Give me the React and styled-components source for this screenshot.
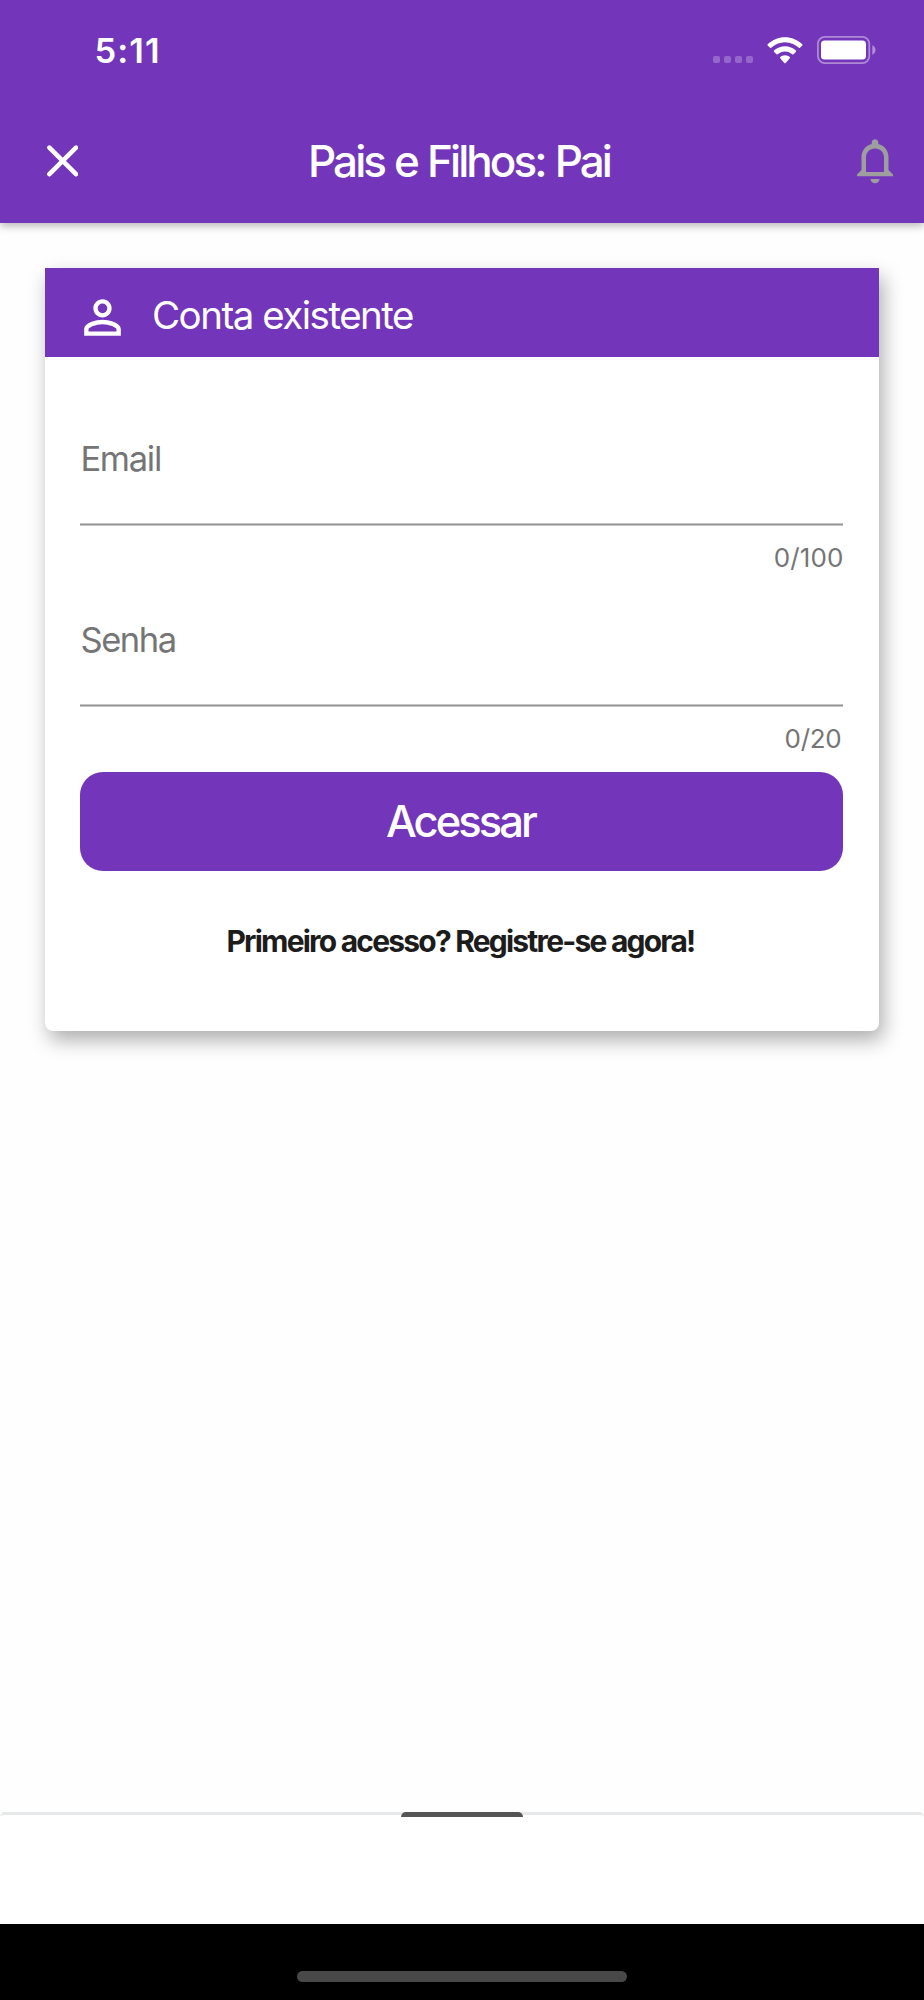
import styled, { createGlobalStyle } from 'styled-components';
import { MdPersonOutline } from 'react-icons/md';

const GlobalStyle = createGlobalStyle`
	body {
		margin: 0;
		background-color: #fff;
		font-family: Inter, 'Liberation Sans', sans-serif;
	}

	* {
		box-sizing: border-box;
	}
`;

const Screen = styled.div`
	display: flex;
	flex-direction: column;
	width: 924px;
	height: 2000px;
	background-color: #fefefe;
`;

const Header = styled.header`
	height: 223px;
	background-color: #7335b9;
	color: #fff;
	box-shadow: 0 3px 8px rgba(0, 0, 0, 0.28);
`;

const StatusBar = styled.div`
	display: flex;
	justify-content: space-between;
	align-items: center;
	height: 97px;
	padding: 4px 48px 0 94.5px;
`;

const Time = styled.div`
	font-size: 34.5px;
	font-weight: 600;
	letter-spacing: 1.07px;
`;

const StatusIcons = styled.div`
	display: flex;
	align-items: center;
	padding-bottom: 1px;
`;

const Signal = styled.div`
	display: flex;
	gap: 4px;
	margin: 19px 14px 0 0;
`;

const SignalDot = styled.span`
	width: 7px;
	height: 7px;
	border-radius: 2px;
	background-color: rgba(255, 255, 255, 0.25);
`;

const NavBar = styled.div`
	display: flex;
	justify-content: space-between;
	align-items: center;
	height: 126px;
	padding: 1px 31px 0 46px;
`;

const Title = styled.h1`
	margin: 0 17px 0 0;
	font-size: 44px;
	font-weight: 500;
	letter-spacing: -2.93px;
	word-spacing: 1.2px;
	white-space: nowrap;
`;

const Content = styled.main`
	flex: 1;
	padding: 45px;
`;

const Card = styled.section`
	height: 763px;
	border-radius: 0 0 8px 8px;
	background-color: #fff;
	box-shadow: 4px 9px 20px rgba(0, 0, 0, 0.32);
`;

const CardHeader = styled.div`
	display: flex;
	align-items: center;
	gap: 22px;
	height: 89px;
	padding: 9px 30px 0;
	background-color: #7335b9;
	color: #fff;
`;

const CardTitle = styled.h2`
	margin: 0;
	padding-bottom: 4px;
	font-size: 38.5px;
	font-weight: 400;
	letter-spacing: -1.5px;
`;

const Form = styled.div`
	display: flex;
	flex-direction: column;
	padding: 53px 35.6px 0 35.4px;
`;

const FieldBox = styled.div`
	height: 181px;
	color: #757575;
`;

const Label = styled.label`
	display: block;
	height: 113px;
	font-size: 34.5px;
	letter-spacing: ${({ $spacing }) => $spacing}px;
	line-height: 97px;
`;

const Underline = styled.div`
	height: 3px;
	border: solid #c4c4c4;
	border-width: 1px 0;
	background-color: #969696;
`;

const Counter = styled.div`
	padding-right: ${({ $inset }) => $inset}px;
	font-size: 26px;
	letter-spacing: ${({ $spacing }) => $spacing}px;
	line-height: 63px;
	text-align: right;
`;

const SubmitButton = styled.button`
	height: 98.5px;
	padding: 0 3px 0 0;
	border: none;
	border-radius: 23px;
	background-color: #7335b9;
	color: #fff;
	font-family: inherit;
	font-size: 43.5px;
	font-weight: 500;
	letter-spacing: -2.95px;
`;

const RegisterLink = styled.a`
	margin-right: 3px;
	color: #1c1c1c;
	font-size: 30px;
	font-weight: 700;
	letter-spacing: -1.79px;
	line-height: 140px;
	text-align: center;
	white-space: nowrap;
`;

const BottomSheet = styled.div`
	display: flex;
	justify-content: center;
	height: 112px;
	border-top: 3px solid #e7e8ea;
	border-radius: 5px 5px 0 0;
	background-color: #fff;
`;

const SheetHandle = styled.div`
	width: 122px;
	height: 5px;
	margin-top: -3px;
	border-radius: 6px 6px 0 0;
	background-color: #555;
`;

const HomeBar = styled.div`
	display: flex;
	justify-content: center;
	height: 76px;
	padding-top: 47px;
	background-color: #000;
`;

const HomeIndicator = styled.div`
	width: 330px;
	height: 11px;
	border-radius: 6px;
	background-color: #484848;
`;

const Battery = styled.svg`
	margin-left: 14px;
`;

const Bell = styled.svg`
	margin-top: 2px;
`;

const WifiIcon = () => (
	<svg width="36" height="27" viewBox="0 0 36 27" fill="#fff">
		<path d="M18 0.2C24.7 0.2 30.9 2.9 35.3 7.3C35.7 7.7 35.7 8.1 35.3 8.5L33 10.8C32.6 11.2 32.2 11.2 31.8 10.8C28.1 7.4 23.3 5.3 18 5.3S7.9 7.4 4.2 10.8C3.8 11.2 3.4 11.2 3 10.8L0.7 8.5C0.3 8.1 0.3 7.7 0.7 7.3C5.1 2.9 11.3 0.2 18 0.2Z" />
		<path d="M18 9.2C22.2 9.2 26.1 10.9 29 13.6C29.4 14 29.4 14.4 29 14.8L26.5 17.3C26.1 17.7 25.7 17.7 25.3 17.3C23.4 15.5 20.8 14.4 18 14.4S12.6 15.5 10.7 17.3C10.3 17.7 9.9 17.7 9.5 17.3L7 14.8C6.6 14.4 6.6 14 7 13.6C9.9 10.9 13.8 9.2 18 9.2Z" />
		<path d="M18 18.2C19.8 18.2 21.5 18.9 22.8 20C23.2 20.4 23.2 20.8 22.8 21.2L18.7 25.9C18.3 26.4 17.7 26.4 17.3 25.9L13.2 21.2C12.8 20.8 12.8 20.4 13.2 20C14.5 18.9 16.2 18.2 18 18.2Z" />
	</svg>
);

const BatteryIcon = () => (
	<Battery width="59" height="28" viewBox="0 0 59 28" fill="none">
		<rect x="0.9" y="0.9" width="51.4" height="26.2" rx="7" stroke="#fff" strokeOpacity="0.42" strokeWidth="1.8" />
		<rect x="4" y="4.6" width="45" height="19" rx="3.6" fill="#fff" />
		<path d="M55.3 9.3C57.3 10.1 58.5 11.9 58.5 14S57.3 17.9 55.3 18.7Z" fill="#fff" fillOpacity="0.45" />
	</Battery>
);

const CloseIcon = () => (
	<svg width="32" height="32" viewBox="0 0 32 32" fill="none" stroke="#fff" strokeWidth="4.6">
		<path d="M3.4 2.6L30 29.2M30 2.6L3.4 29.2" strokeLinecap="round" />
	</svg>
);

const BellIcon = () => (
	<Bell width="36" height="45" viewBox="0 0 36 45" fill="#9e9e9e">
		<path
			fillRule="evenodd"
			d="M18 0.3C19.9 0.3 21.3 1.8 21.3 3.7V5C27.3 6.4 31.5 11.6 31.5 18.2V31L36 35.4V37.3H0V35.4L4.5 31V18.2C4.5 11.6 8.7 6.4 14.7 5V3.7C14.7 1.8 16.1 0.3 18 0.3ZM18 9.5C12.8 9.5 9 13.4 9 18.6V33H27V18.6C27 13.4 23.2 9.5 18 9.5Z"
		/>
		<path d="M13.5 40H22.5C22.5 42.4 20.5 44.3 18 44.3S13.5 42.4 13.5 40Z" />
	</Bell>
);

const Field = ({ label, counter, labelSpacing, counterSpacing, counterInset }) => (
	<FieldBox>
		<Label $spacing={labelSpacing}>{label}</Label>
		<Underline />
		<Counter $spacing={counterSpacing} $inset={counterInset}>
			{counter}
		</Counter>
	</FieldBox>
);

const App = () => {
	return (
		<>
			<GlobalStyle />
			<Screen>
				<Header>
					<StatusBar>
						<Time>5:11</Time>
						<StatusIcons>
							<Signal>
								<SignalDot />
								<SignalDot />
								<SignalDot />
								<SignalDot />
							</Signal>
							<WifiIcon />
							<BatteryIcon />
						</StatusIcons>
					</StatusBar>
					<NavBar>
						<CloseIcon />
						<Title>Pais e Filhos: Pai</Title>
						<BellIcon />
					</NavBar>
				</Header>
				<Content>
					<Card>
						<CardHeader>
							<MdPersonOutline size={55} />
							<CardTitle>Conta existente</CardTitle>
						</CardHeader>
						<Form>
							<Field
								label="Email"
								counter="0/100"
								labelSpacing={-1.3}
								counterSpacing={0.1}
								counterInset={0}
							/>
							<Field
								label="Senha"
								counter="0/20"
								labelSpacing={-1.4}
								counterSpacing={-0.3}
								counterInset={2}
							/>
							<SubmitButton>Acessar</SubmitButton>
							<RegisterLink>Primeiro acesso? Registre-se agora!</RegisterLink>
						</Form>
					</Card>
				</Content>
				<BottomSheet>
					<SheetHandle />
				</BottomSheet>
				<HomeBar>
					<HomeIndicator />
				</HomeBar>
			</Screen>
		</>
	);
};

export default App;
